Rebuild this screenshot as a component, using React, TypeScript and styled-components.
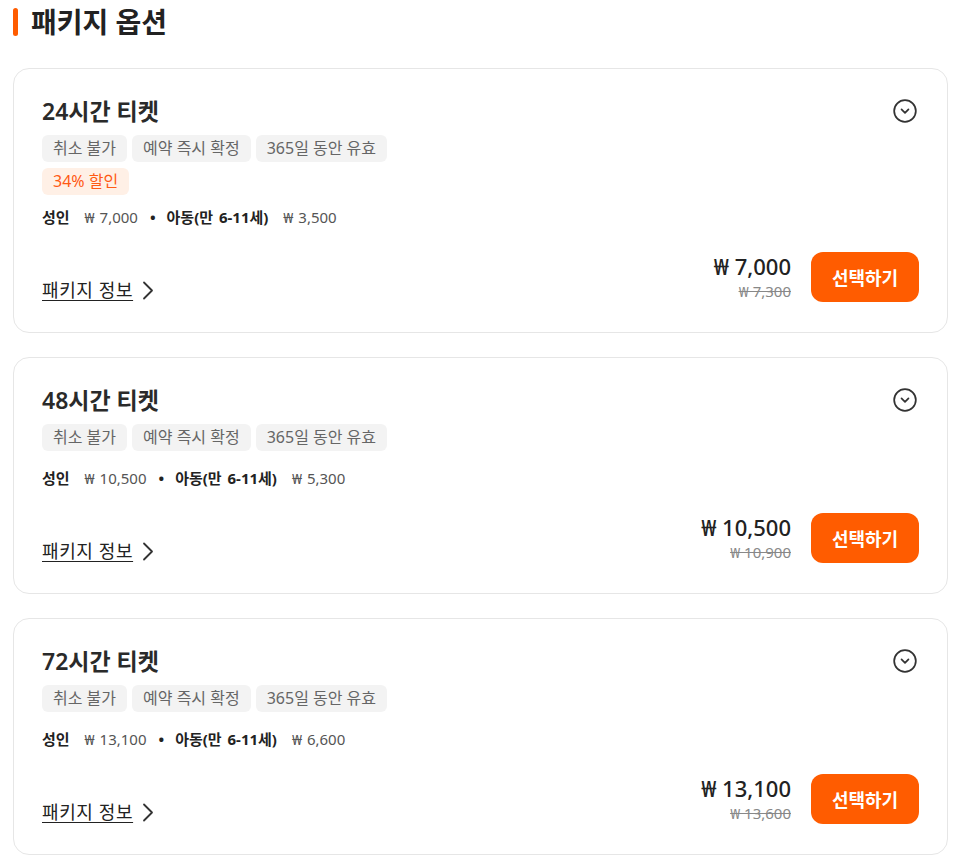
import React from 'react';
import styled, { createGlobalStyle } from 'styled-components';

const GlobalStyle = createGlobalStyle`
  * { box-sizing: border-box; }
  html, body { margin: 0; padding: 0; background: #ffffff; }
  body {
    font-family: "Noto Sans", "Noto Sans CJK KR", "Liberation Sans", sans-serif;
    color: #222222;
  }
`;

const Page = styled.div`
  padding: 8px 18px 12px 13px;
`;

const Heading = styled.h2`
  display: flex;
  align-items: center;
  gap: 13px;
  margin: 0 0 32px 0;
  font-size: 28px;
  line-height: 28px;
  font-weight: 700;
  color: #222222;
`;

const HeadingBar = styled.span`
  display: block;
  width: 5px;
  height: 28px;
  border-radius: 3px;
  background: #ff5c00;
`;

const CardList = styled.div`
  display: flex;
  flex-direction: column;
  gap: 24px;
`;

const Card = styled.section`
  border: 1px solid #e6e6e6;
  border-radius: 16px;
  padding: 27px 28px 30px 28px;
  background: #ffffff;
`;

const TitleRow = styled.div`
  display: flex;
  align-items: center;
  justify-content: space-between;
`;

const Title = styled.h3`
  margin: 0;
  font-size: 23px;
  line-height: 30px;
  font-weight: 600;
  color: #2a2a2a;
`;

const ToggleButton = styled.button`
  display: flex;
  align-items: center;
  justify-content: center;
  padding: 0;
  margin-right: 1px;
  border: 0;
  background: none;
  color: #333333;
  cursor: pointer;
`;

const TagGroup = styled.div`
  display: flex;
  flex-direction: column;
  align-items: flex-start;
  gap: 6px;
  margin-top: 9px;
`;

const TagRow = styled.div`
  display: flex;
  flex-wrap: wrap;
  gap: 5px;
`;

const Tag = styled.span<{ $accent?: boolean }>`
  display: inline-block;
  padding: 3px 11px;
  border-radius: 6px;
  font-size: 16px;
  line-height: 21px;
  background: ${(p) => (p.$accent ? '#fff0e6' : '#f3f3f3')};
  color: ${(p) => (p.$accent ? '#ff5a14' : '#666666')};
`;

const PriceLine = styled.div<{ $tight?: boolean }>`
  display: flex;
  align-items: center;
  margin-top: ${(p) => (p.$tight ? '11px' : '16px')};
  font-size: 15px;
  line-height: 22px;
`;

const PriceLabel = styled.span`
  font-size: 15px;
  font-weight: 700;
  color: #222222;
  word-spacing: 2px;
`;

const PriceAmount = styled.span`
  margin-left: 15px;
  color: #555555;
  word-spacing: 1px;
`;

const Dot = styled.span`
  margin: 0 11px 0 12px;
  font-weight: 700;
  color: #222222;
`;

const BottomRow = styled.div`
  display: flex;
  align-items: flex-end;
  justify-content: space-between;
  margin-top: 24px;
`;

const InfoLink = styled.a`
  display: inline-flex;
  align-items: center;
  gap: 9px;
  font-size: 18px;
  line-height: 24px;
  color: #222222;
  cursor: pointer;
`;

const InfoText = styled.span`
  text-decoration: underline;
  text-underline-offset: 3px;
  letter-spacing: 0.6px;
`;

const Purchase = styled.div`
  display: flex;
  align-items: center;
  gap: 20px;
`;

const PriceBlock = styled.div`
  display: flex;
  flex-direction: column;
  align-items: flex-end;
`;

const FinalPrice = styled.span`
  font-size: 22px;
  line-height: 26px;
  font-weight: 500;
  color: #222222;
`;

const OriginalPrice = styled.span`
  margin-top: 2px;
  font-size: 15px;
  line-height: 20px;
  color: #888888;
  text-decoration: line-through;
`;

const SelectButton = styled.button`
  width: 108px;
  height: 50px;
  border: 0;
  border-radius: 12px;
  background: #ff5c00;
  color: #ffffff;
  font-family: inherit;
  font-size: 18px;
  font-weight: 700;
  cursor: pointer;
`;

const CircleChevron = () => (
  <svg width="26" height="26" viewBox="0 0 24 24" fill="none" stroke="currentColor" strokeWidth="1.6" strokeLinecap="round" strokeLinejoin="round">
    <circle cx="12" cy="12" r="10" />
    <path d="M8.8 10.6 L12 13.8 L15.2 10.6" />
  </svg>
);

const ChevronRight = () => (
  <svg width="12" height="19" viewBox="0 0 12 19" fill="none" stroke="#333333" strokeWidth="1.8" strokeLinecap="round" strokeLinejoin="round">
    <path d="M2 1.5 L10 9.5 L2 17.5" />
  </svg>
);

type Pkg = {
  title: string;
  discount?: string;
  adult: string;
  child: string;
  price: string;
  original: string;
};

const packages: Pkg[] = [
  { title: '24시간 티켓', discount: '34% 할인', adult: '₩ 7,000', child: '₩ 3,500', price: '₩ 7,000', original: '₩ 7,300' },
  { title: '48시간 티켓', adult: '₩ 10,500', child: '₩ 5,300', price: '₩ 10,500', original: '₩ 10,900' },
  { title: '72시간 티켓', adult: '₩ 13,100', child: '₩ 6,600', price: '₩ 13,100', original: '₩ 13,600' },
];

const tags = ['취소 불가', '예약 즉시 확정', '365일 동안 유효'];

const PackageCard = ({ pkg }: { pkg: Pkg }) => (
  <Card>
    <TitleRow>
      <Title>{pkg.title}</Title>
      <ToggleButton aria-label="펼치기">
        <CircleChevron />
      </ToggleButton>
    </TitleRow>
    <TagGroup>
      <TagRow>
        {tags.map((t) => (
          <Tag key={t}>{t}</Tag>
        ))}
      </TagRow>
      {pkg.discount && <Tag $accent>{pkg.discount}</Tag>}
    </TagGroup>
    <PriceLine $tight={!!pkg.discount}>
      <PriceLabel>성인</PriceLabel>
      <PriceAmount>{pkg.adult}</PriceAmount>
      <Dot>•</Dot>
      <PriceLabel>아동(만 6-11세)</PriceLabel>
      <PriceAmount>{pkg.child}</PriceAmount>
    </PriceLine>
    <BottomRow>
      <InfoLink>
        <InfoText>패키지 정보</InfoText>
        <ChevronRight />
      </InfoLink>
      <Purchase>
        <PriceBlock>
          <FinalPrice>{pkg.price}</FinalPrice>
          <OriginalPrice>{pkg.original}</OriginalPrice>
        </PriceBlock>
        <SelectButton>선택하기</SelectButton>
      </Purchase>
    </BottomRow>
  </Card>
);

export default function App() {
  return (
    <>
      <GlobalStyle />
      <Page>
        <Heading>
          <HeadingBar />
          패키지 옵션
        </Heading>
        <CardList>
          {packages.map((p) => (
            <PackageCard key={p.title} pkg={p} />
          ))}
        </CardList>
      </Page>
    </>
  );
}
